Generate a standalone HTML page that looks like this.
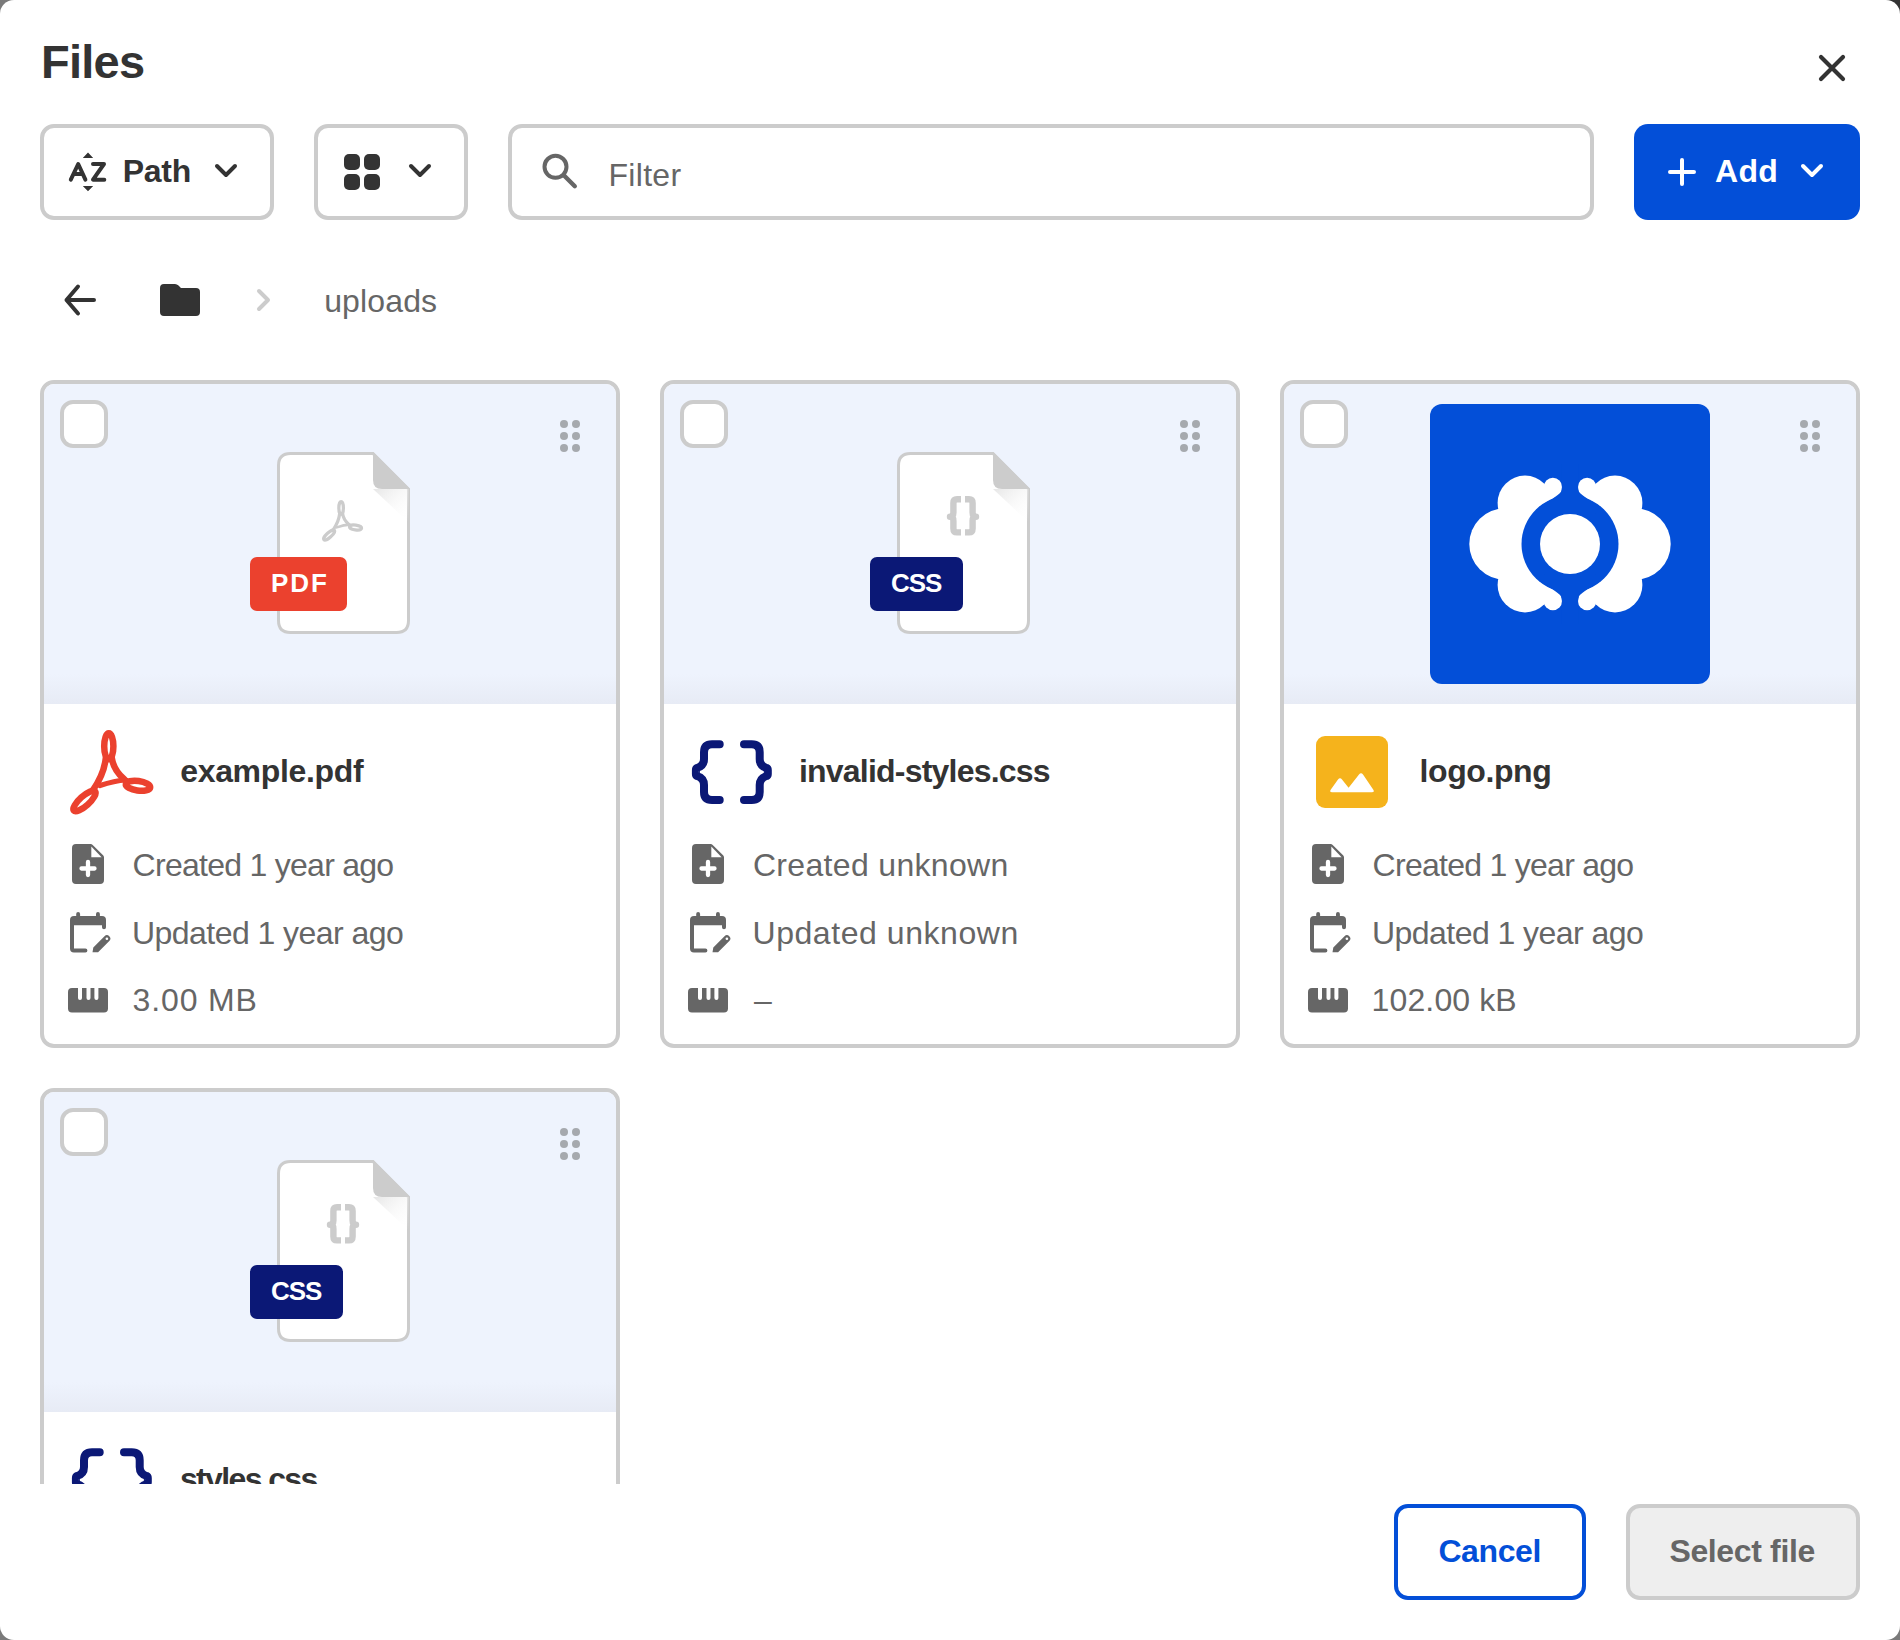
<!DOCTYPE html>
<html><head><meta charset="utf-8"><title>Files</title>
<style>
html,body{margin:0;padding:0;}
body{width:1900px;height:1640px;overflow:hidden;background:#7a7a7a;position:relative;font-family:"Liberation Sans",sans-serif;}
.modal{position:absolute;left:0;top:0;width:1900px;height:1640px;background:#fff;border-radius:14px;overflow:hidden;}
.abs{position:absolute;}
.title{position:absolute;left:41px;top:38px;font-size:47px;line-height:47px;font-weight:700;color:#333;white-space:nowrap;letter-spacing:-0.75px;}
.btn{position:absolute;box-sizing:border-box;border:4px solid #cccccc;border-radius:14px;background:#fff;}
.scroller{position:absolute;left:0;top:360px;width:1900px;height:1124px;overflow:hidden;}
.card{position:absolute;box-sizing:border-box;width:580px;height:668px;border:4px solid #cccccc;border-radius:14px;background:#fff;overflow:hidden;}
.preview{position:absolute;left:0;top:0;width:572px;height:320px;background:linear-gradient(to bottom,#eef3fd 0,#eef3fd 290px,#e7ebf5 320px);}
.cb{position:absolute;left:16px;top:16px;width:48px;height:48px;box-sizing:border-box;border:4px solid #cccccc;border-radius:13px;background:#fff;}
.badge{position:absolute;height:54px;border-radius:7px;color:#fff;font-weight:700;font-size:26px;line-height:52px;text-align:left;padding-left:21px;box-sizing:border-box;}
.name{position:absolute;left:137px;top:370.61px;font-size:32px;line-height:32px;font-weight:700;color:#333;white-space:nowrap;}
.meta{position:absolute;left:89.6px;font-size:32px;line-height:32px;color:#666;white-space:nowrap;}
.t16{font-size:32px;line-height:32px;white-space:nowrap;position:absolute;}
</style></head><body>
<div class="abs" style="left:1860px;top:0;width:40px;height:40px;background:#333"></div>
<div class="modal">
<div class="title">Files</div>
<svg class="abs" style="left:1816px;top:52px" width="32" height="32" viewBox="0 0 32 32"><path d="M5 5 L27 27 M27 5 L5 27" stroke="#333" stroke-width="4.2" stroke-linecap="round"/></svg>

<!-- toolbar -->
<div class="btn" style="left:40px;top:124px;width:234px;height:96px;"></div>
<svg class="abs" style="left:66px;top:150px" width="44" height="44" viewBox="0 0 44 44">
<path d="M22 2.4 L27.2 8 H16.8 Z M22 41.2 L27.2 36 H16.8 Z" fill="#333"/>
<path d="M4.8 29.7 L12.2 14 L19.4 29.7 M7.6 24 H16.8" fill="none" stroke="#333" stroke-width="4" stroke-linecap="round" stroke-linejoin="round"/>
<path d="M27 14 H38 L27 29.7 H38.3" fill="none" stroke="#333" stroke-width="4" stroke-linecap="round" stroke-linejoin="round"/>
</svg>
<div class="t16" style="left:122.7px;top:154.91px;font-weight:700;color:#333;letter-spacing:-0.23px">Path</div>
<svg class="abs" style="left:213px;top:162px" width="26" height="18" viewBox="0 0 26 18"><path d="M4 4 L13 13 L22 4" fill="none" stroke="#333" stroke-width="4" stroke-linecap="round" stroke-linejoin="round"/></svg>

<div class="btn" style="left:314px;top:124px;width:154px;height:96px;"></div>
<svg class="abs" style="left:344px;top:154px" width="36" height="36" viewBox="0 0 36 36" fill="#333">
<rect x="0" y="0" width="16" height="16" rx="5"/><rect x="20" y="0" width="16" height="16" rx="5"/>
<rect x="0" y="20" width="16" height="16" rx="5"/><rect x="20" y="20" width="16" height="16" rx="5"/>
</svg>
<svg class="abs" style="left:407px;top:162px" width="26" height="18" viewBox="0 0 26 18"><path d="M4 4 L13 13 L22 4" fill="none" stroke="#333" stroke-width="4" stroke-linecap="round" stroke-linejoin="round"/></svg>

<div class="btn" style="left:508px;top:124px;width:1086px;height:96px;"></div>
<svg class="abs" style="left:540px;top:152px" width="40" height="40" viewBox="0 0 40 40"><circle cx="15.5" cy="14.8" r="11" fill="none" stroke="#666" stroke-width="4"/><path d="M23.8 23.2 L34.8 34.2" stroke="#666" stroke-width="4.4" stroke-linecap="round"/></svg>
<div class="t16" style="left:608.5px;top:158.61px;color:#666;letter-spacing:0.3px">Filter</div>

<div class="abs" style="left:1634px;top:124px;width:226px;height:96px;background:#034fd8;border-radius:14px;"></div>
<svg class="abs" style="left:1666px;top:156px" width="32" height="32" viewBox="0 0 32 32"><path d="M16 4 V28 M4 16 H28" stroke="#fff" stroke-width="4" stroke-linecap="round"/></svg>
<div class="t16" style="left:1715px;top:154.91px;font-weight:700;color:#fff;letter-spacing:0.3px">Add</div>
<svg class="abs" style="left:1799px;top:162px" width="26" height="18" viewBox="0 0 26 18"><path d="M4 4 L13 13 L22 4" fill="none" stroke="#fff" stroke-width="4" stroke-linecap="round" stroke-linejoin="round"/></svg>

<!-- breadcrumbs -->
<svg class="abs" style="left:60px;top:280px" width="40" height="40" viewBox="0 0 40 40"><path d="M18 6.5 L6.5 20 L18 33.5 M6.5 20 H34" fill="none" stroke="#333" stroke-width="4" stroke-linecap="round" stroke-linejoin="round"/></svg>
<svg class="abs" style="left:160px;top:284px" width="40" height="32" viewBox="0 0 40 32"><path d="M4 0 H15 Q17 0 18.5 1.5 L21 4 H36 Q40 4 40 8 V28 Q40 32 36 32 H4 Q0 32 0 28 V4 Q0 0 4 0 Z" fill="#333"/></svg>
<svg class="abs" style="left:254px;top:286px" width="20" height="28" viewBox="0 0 20 28"><path d="M5 5 L14 14 L5 23" fill="none" stroke="#cccccc" stroke-width="4" stroke-linecap="round" stroke-linejoin="round"/></svg>
<div class="t16" style="left:324.2px;top:284.91px;color:#666;letter-spacing:0.13px">uploads</div>

<div class="scroller">
<div class="card" style="left:40px;top:20px">
<div class="preview">
<svg width="133" height="182" viewBox="0 0 133 182" style="position:absolute;left:233px;top:68px">
<defs><linearGradient id="fspdf" x1="0" y1="0" x2="1" y2="1"><stop offset="0" stop-color="#e6e6e6"/><stop offset="1" stop-color="#ffffff" stop-opacity="0"/></linearGradient></defs>
<path d="M13.5 1.5 H96 L131.5 37 V168.5 Q131.5 180.5 119.5 180.5 H13.5 Q1.5 180.5 1.5 168.5 V13.5 Q1.5 1.5 13.5 1.5 Z" fill="#fff" stroke="#cccccc" stroke-width="3"/>
<path d="M96 37 L131.5 37 L131.5 70 Z" fill="url(#fspdf)"/>
<path d="M96 0 V28 Q96 37 105 37 H133 Z" fill="#cccccc"/>
<svg x="41" y="44" width="49.4" height="49.4" viewBox="0 0 100 100"><g fill="none" stroke="#cccccc" stroke-width="6.5" stroke-linecap="round" stroke-linejoin="round">
<ellipse cx="46.8" cy="24.3" rx="4.6" ry="13"/>
<path d="M43.8 36 C 42.5 48, 38 58, 31 68"/>
<path d="M49.8 36 C 51 44, 55 51, 62 57"/>
<path d="M38 63.5 C 47 60.5, 55 58.5, 64 58" stroke-width="5.2"/>
<ellipse transform="rotate(-42 22.5 79)" cx="22.5" cy="79" rx="14.3" ry="4.8"/>
<ellipse transform="rotate(8 76 63.8)" cx="76" cy="63.8" rx="12.3" ry="4.8"/>
</g></svg>
</svg><div class="badge" style="left:206px;top:173px;width:97px;background:#eb412e;letter-spacing:1.9px">PDF</div>
<div class="cb"></div>
<svg width="572" height="320" style="position:absolute;left:0;top:0" fill="#a6a9ae"><circle cx="520" cy="40" r="4"/><circle cx="520" cy="52" r="4"/><circle cx="520" cy="64" r="4"/><circle cx="532" cy="40" r="4"/><circle cx="532" cy="52" r="4"/><circle cx="532" cy="64" r="4"/></svg>
</div>
<svg width="100" height="100" viewBox="0 0 100 100" style="position:absolute;left:18px;top:338px"><g fill="none" stroke="#eb412e" stroke-width="6.5" stroke-linecap="round" stroke-linejoin="round">
<ellipse cx="46.8" cy="24.3" rx="4.6" ry="13"/>
<path d="M43.8 36 C 42.5 48, 38 58, 31 68"/>
<path d="M49.8 36 C 51 44, 55 51, 62 57"/>
<path d="M38 63.5 C 47 60.5, 55 58.5, 64 58" stroke-width="5.2"/>
<ellipse transform="rotate(-42 22.5 79)" cx="22.5" cy="79" rx="14.3" ry="4.8"/>
<ellipse transform="rotate(8 76 63.8)" cx="76" cy="63.8" rx="12.3" ry="4.8"/>
</g></svg>
<div class="name" style="left:136.2px;letter-spacing:-0.32px">example.pdf</div>
<svg width="32" height="40" viewBox="0 0 32 40" style="position:absolute;left:28px;top:460px">
<path d="M4 0 H18.6 Q19.8 0 20.7 0.9 L31.1 11.3 Q32 12.2 32 13.4 V36 Q32 40 28 40 H4 Q0 40 0 36 V4 Q0 0 4 0 Z" fill="#666"/>
<path d="M19.3 2.6 V13.2 H29.6 Z" fill="#fff"/>
<path d="M16 18 V31 M9.5 24.5 H22.5" stroke="#fff" stroke-width="4.3" stroke-linecap="round"/>
</svg><svg width="42" height="42" viewBox="0 0 42 42" style="position:absolute;left:26px;top:528px">
<path d="M4 4 H32 Q36 4 36 8 V15.2 Q36 17.2 34 17.2 Q32 17.2 32 15.2 V13.2 H4 V36.4 H15.4 Q17.4 36.4 17.4 38.4 Q17.4 40.4 15.4 40.4 H4 Q0 40.4 0 36.4 V8 Q0 4 4 4 Z" fill="#666"/>
<rect x="6.2" y="0" width="3.9" height="7" rx="1.95" fill="#666"/>
<rect x="26" y="0" width="3.9" height="7" rx="1.95" fill="#666"/>
<path d="M22.5 40.2 L23.3 35.5 L34.5 24.3 Q36.9 21.9 39.3 24.3 Q41.7 26.7 39.3 29.1 L28.1 40.3 Z" fill="#666"/>
<circle cx="36.9" cy="26.7" r="1.3" fill="#fff"/>
</svg><svg width="40" height="25" viewBox="0 0 40 25" style="position:absolute;left:24px;top:603.8px">
<path d="M4 0 H10 V10 Q10 12 12 12 Q14 12 14 10 V0 H18.5 V10 Q18.5 12 20.5 12 Q22.5 12 22.5 10 V0 H26.4 V10 Q26.4 12 28.4 12 Q30.4 12 30.4 10 V0 H36 Q40 0 40 4 V20.5 Q40 24.5 36 24.5 H4 Q0 24.5 0 20.5 V4 Q0 0 4 0 Z" fill="#666"/>
</svg>
<div class="meta" style="left:88.6px;top:464.61px;letter-spacing:-0.729px">Created 1 year ago</div>
<div class="meta" style="left:88px;top:532.91px;letter-spacing:-0.547px">Updated 1 year ago</div>
<div class="meta" style="left:88.6px;top:600.11px;letter-spacing:0.867px">3.00 MB</div>
</div>
<div class="card" style="left:660px;top:20px">
<div class="preview">
<svg width="133" height="182" viewBox="0 0 133 182" style="position:absolute;left:233px;top:68px">
<defs><linearGradient id="fscss" x1="0" y1="0" x2="1" y2="1"><stop offset="0" stop-color="#e6e6e6"/><stop offset="1" stop-color="#ffffff" stop-opacity="0"/></linearGradient></defs>
<path d="M13.5 1.5 H96 L131.5 37 V168.5 Q131.5 180.5 119.5 180.5 H13.5 Q1.5 180.5 1.5 168.5 V13.5 Q1.5 1.5 13.5 1.5 Z" fill="#fff" stroke="#cccccc" stroke-width="3"/>
<path d="M96 37 L131.5 37 L131.5 70 Z" fill="url(#fscss)"/>
<path d="M96 0 V28 Q96 37 105 37 H133 Z" fill="#cccccc"/>
<g fill="none" stroke="#cccccc" stroke-width="6.4" stroke-linejoin="round"><path d="M64 47.3 H60 Q56.4 47.3 56.4 51 V60.5 Q56.4 64.8 53 64.8 Q56.4 64.8 56.4 69 V76.5 Q56.4 80.4 60 80.4 H64"/><path d="M68 47.3 H72 Q75.6 47.3 75.6 51 V60.5 Q75.6 64.8 79 64.8 Q75.6 64.8 75.6 69 V76.5 Q75.6 80.4 72 80.4 H68"/></g>
</svg><div class="badge" style="left:206px;top:173px;width:93px;background:#0b1876;letter-spacing:-1px">CSS</div>
<div class="cb"></div>
<svg width="572" height="320" style="position:absolute;left:0;top:0" fill="#a6a9ae"><circle cx="520" cy="40" r="4"/><circle cx="520" cy="52" r="4"/><circle cx="520" cy="64" r="4"/><circle cx="532" cy="40" r="4"/><circle cx="532" cy="52" r="4"/><circle cx="532" cy="64" r="4"/></svg>
</div>
<svg width="104" height="94" viewBox="0 0 104 94" style="position:absolute;left:16px;top:341px"><g fill="none" stroke="#0b1876" stroke-width="8" stroke-linecap="round" stroke-linejoin="round"><path d="M39.7 19.2 H32 Q24 19.2 24 27.2 V34 Q24 41 17 43 Q15.9 43.5 15.9 45 V49 Q15.9 50.5 17 51 Q24 53 24 60 V67 Q24 75 32 75 H39.7"/><path d="M64 19.2 H71.7 Q79.7 19.2 79.7 27.2 V34 Q79.7 41 86.7 43 Q87.8 43.5 87.8 45 V49 Q87.8 50.5 86.7 51 Q79.7 53 79.7 60 V67 Q79.7 75 71.7 75 H64"/></g></svg>
<div class="name" style="left:135px;letter-spacing:-0.794px">invalid-styles.css</div>
<svg width="32" height="40" viewBox="0 0 32 40" style="position:absolute;left:28px;top:460px">
<path d="M4 0 H18.6 Q19.8 0 20.7 0.9 L31.1 11.3 Q32 12.2 32 13.4 V36 Q32 40 28 40 H4 Q0 40 0 36 V4 Q0 0 4 0 Z" fill="#666"/>
<path d="M19.3 2.6 V13.2 H29.6 Z" fill="#fff"/>
<path d="M16 18 V31 M9.5 24.5 H22.5" stroke="#fff" stroke-width="4.3" stroke-linecap="round"/>
</svg><svg width="42" height="42" viewBox="0 0 42 42" style="position:absolute;left:26px;top:528px">
<path d="M4 4 H32 Q36 4 36 8 V15.2 Q36 17.2 34 17.2 Q32 17.2 32 15.2 V13.2 H4 V36.4 H15.4 Q17.4 36.4 17.4 38.4 Q17.4 40.4 15.4 40.4 H4 Q0 40.4 0 36.4 V8 Q0 4 4 4 Z" fill="#666"/>
<rect x="6.2" y="0" width="3.9" height="7" rx="1.95" fill="#666"/>
<rect x="26" y="0" width="3.9" height="7" rx="1.95" fill="#666"/>
<path d="M22.5 40.2 L23.3 35.5 L34.5 24.3 Q36.9 21.9 39.3 24.3 Q41.7 26.7 39.3 29.1 L28.1 40.3 Z" fill="#666"/>
<circle cx="36.9" cy="26.7" r="1.3" fill="#fff"/>
</svg><svg width="40" height="25" viewBox="0 0 40 25" style="position:absolute;left:24px;top:603.8px">
<path d="M4 0 H10 V10 Q10 12 12 12 Q14 12 14 10 V0 H18.5 V10 Q18.5 12 20.5 12 Q22.5 12 22.5 10 V0 H26.4 V10 Q26.4 12 28.4 12 Q30.4 12 30.4 10 V0 H36 Q40 0 40 4 V20.5 Q40 24.5 36 24.5 H4 Q0 24.5 0 20.5 V4 Q0 0 4 0 Z" fill="#666"/>
</svg>
<div class="meta" style="left:88.9px;top:464.61px;letter-spacing:0.329px">Created unknown</div>
<div class="meta" style="left:88.5px;top:532.91px;letter-spacing:0.557px">Updated unknown</div>
<div class="meta" style="left:89.9px;top:600.11px;letter-spacing:0px">&ndash;</div>
</div>
<div class="card" style="left:1280px;top:20px">
<div class="preview">
<svg width="280" height="280" viewBox="0 0 280 280" style="position:absolute;left:146px;top:20px">
<rect width="280" height="280" rx="12" fill="#034fd8"/>
<g fill="#fff">
<circle cx="75" cy="140" r="35.7"/>
<circle cx="95" cy="99" r="27.4"/>
<circle cx="95" cy="181" r="27.4"/>
<circle cx="122.9" cy="83" r="9.2"/>
<circle cx="122.9" cy="197" r="9.2"/>
<circle cx="205" cy="140" r="35.7"/>
<circle cx="185" cy="99" r="27.4"/>
<circle cx="185" cy="181" r="27.4"/>
<circle cx="157.1" cy="83" r="9.2"/>
<circle cx="157.1" cy="197" r="9.2"/>
<path d="M80 110 L123 80 L131.7 88 V192 L123 200 L80 170 Z"/>
<path d="M200 110 L157 80 L148.3 88 V192 L157 200 L200 170 Z"/>
</g>
<circle cx="140" cy="140" r="48.5" fill="#034fd8"/>
<path d="M131.9 60 H148.1 V86 C149 90, 158 95, 171 103 L140 140 L109 103 C122 95, 131 90, 131.9 86 Z" fill="#034fd8"/>
<path d="M131.9 220 H148.1 V194 C149 190, 158 185, 171 177 L140 140 L109 177 C122 185, 131 190, 131.9 194 Z" fill="#034fd8"/>
<circle cx="140" cy="140" r="30" fill="#fff"/>
</svg>
<div class="cb"></div>
<svg width="572" height="320" style="position:absolute;left:0;top:0" fill="#a6a9ae"><circle cx="520" cy="40" r="4"/><circle cx="520" cy="52" r="4"/><circle cx="520" cy="64" r="4"/><circle cx="532" cy="40" r="4"/><circle cx="532" cy="52" r="4"/><circle cx="532" cy="64" r="4"/></svg>
</div>
<svg width="72" height="72" viewBox="0 0 72 72" style="position:absolute;left:32px;top:352px">
<rect width="72" height="72" rx="9" fill="#f5b31c"/>
<path d="M14.5 54 L22 43.5 Q24 41 26 43.5 L32.6 51.8 L43 38.5 Q45 36 47 38.5 L57.5 54 Q58.5 56.2 56 56.2 H16 Q13.5 56.2 14.5 54 Z" fill="#fff"/>
</svg>
<div class="name" style="left:135.5px;letter-spacing:-0.4px">logo.png</div>
<svg width="32" height="40" viewBox="0 0 32 40" style="position:absolute;left:28px;top:460px">
<path d="M4 0 H18.6 Q19.8 0 20.7 0.9 L31.1 11.3 Q32 12.2 32 13.4 V36 Q32 40 28 40 H4 Q0 40 0 36 V4 Q0 0 4 0 Z" fill="#666"/>
<path d="M19.3 2.6 V13.2 H29.6 Z" fill="#fff"/>
<path d="M16 18 V31 M9.5 24.5 H22.5" stroke="#fff" stroke-width="4.3" stroke-linecap="round"/>
</svg><svg width="42" height="42" viewBox="0 0 42 42" style="position:absolute;left:26px;top:528px">
<path d="M4 4 H32 Q36 4 36 8 V15.2 Q36 17.2 34 17.2 Q32 17.2 32 15.2 V13.2 H4 V36.4 H15.4 Q17.4 36.4 17.4 38.4 Q17.4 40.4 15.4 40.4 H4 Q0 40.4 0 36.4 V8 Q0 4 4 4 Z" fill="#666"/>
<rect x="6.2" y="0" width="3.9" height="7" rx="1.95" fill="#666"/>
<rect x="26" y="0" width="3.9" height="7" rx="1.95" fill="#666"/>
<path d="M22.5 40.2 L23.3 35.5 L34.5 24.3 Q36.9 21.9 39.3 24.3 Q41.7 26.7 39.3 29.1 L28.1 40.3 Z" fill="#666"/>
<circle cx="36.9" cy="26.7" r="1.3" fill="#fff"/>
</svg><svg width="40" height="25" viewBox="0 0 40 25" style="position:absolute;left:24px;top:603.8px">
<path d="M4 0 H10 V10 Q10 12 12 12 Q14 12 14 10 V0 H18.5 V10 Q18.5 12 20.5 12 Q22.5 12 22.5 10 V0 H26.4 V10 Q26.4 12 28.4 12 Q30.4 12 30.4 10 V0 H36 Q40 0 40 4 V20.5 Q40 24.5 36 24.5 H4 Q0 24.5 0 20.5 V4 Q0 0 4 0 Z" fill="#666"/>
</svg>
<div class="meta" style="left:88.6px;top:464.61px;letter-spacing:-0.729px">Created 1 year ago</div>
<div class="meta" style="left:88px;top:532.91px;letter-spacing:-0.547px">Updated 1 year ago</div>
<div class="meta" style="left:87.6px;top:600.11px;letter-spacing:0.125px">102.00 kB</div>
</div>
<div class="card" style="left:40px;top:728px">
<div class="preview">
<svg width="133" height="182" viewBox="0 0 133 182" style="position:absolute;left:233px;top:68px">
<defs><linearGradient id="fscss" x1="0" y1="0" x2="1" y2="1"><stop offset="0" stop-color="#e6e6e6"/><stop offset="1" stop-color="#ffffff" stop-opacity="0"/></linearGradient></defs>
<path d="M13.5 1.5 H96 L131.5 37 V168.5 Q131.5 180.5 119.5 180.5 H13.5 Q1.5 180.5 1.5 168.5 V13.5 Q1.5 1.5 13.5 1.5 Z" fill="#fff" stroke="#cccccc" stroke-width="3"/>
<path d="M96 37 L131.5 37 L131.5 70 Z" fill="url(#fscss)"/>
<path d="M96 0 V28 Q96 37 105 37 H133 Z" fill="#cccccc"/>
<g fill="none" stroke="#cccccc" stroke-width="6.4" stroke-linejoin="round"><path d="M64 47.3 H60 Q56.4 47.3 56.4 51 V60.5 Q56.4 64.8 53 64.8 Q56.4 64.8 56.4 69 V76.5 Q56.4 80.4 60 80.4 H64"/><path d="M68 47.3 H72 Q75.6 47.3 75.6 51 V60.5 Q75.6 64.8 79 64.8 Q75.6 64.8 75.6 69 V76.5 Q75.6 80.4 72 80.4 H68"/></g>
</svg><div class="badge" style="left:206px;top:173px;width:93px;background:#0b1876;letter-spacing:-1px">CSS</div>
<div class="cb"></div>
<svg width="572" height="320" style="position:absolute;left:0;top:0" fill="#a6a9ae"><circle cx="520" cy="40" r="4"/><circle cx="520" cy="52" r="4"/><circle cx="520" cy="64" r="4"/><circle cx="532" cy="40" r="4"/><circle cx="532" cy="52" r="4"/><circle cx="532" cy="64" r="4"/></svg>
</div>
<svg width="104" height="94" viewBox="0 0 104 94" style="position:absolute;left:16px;top:341px"><g fill="none" stroke="#0b1876" stroke-width="8" stroke-linecap="round" stroke-linejoin="round"><path d="M39.7 19.2 H32 Q24 19.2 24 27.2 V34 Q24 41 17 43 Q15.9 43.5 15.9 45 V49 Q15.9 50.5 17 51 Q24 53 24 60 V67 Q24 75 32 75 H39.7"/><path d="M64 19.2 H71.7 Q79.7 19.2 79.7 27.2 V34 Q79.7 41 86.7 43 Q87.8 43.5 87.8 45 V49 Q87.8 50.5 86.7 51 Q79.7 53 79.7 60 V67 Q79.7 75 71.7 75 H64"/></g></svg>
<div class="name" style="left:135.9px;letter-spacing:-1.62px">styles.css</div>
<svg width="32" height="40" viewBox="0 0 32 40" style="position:absolute;left:28px;top:460px">
<path d="M4 0 H18.6 Q19.8 0 20.7 0.9 L31.1 11.3 Q32 12.2 32 13.4 V36 Q32 40 28 40 H4 Q0 40 0 36 V4 Q0 0 4 0 Z" fill="#666"/>
<path d="M19.3 2.6 V13.2 H29.6 Z" fill="#fff"/>
<path d="M16 18 V31 M9.5 24.5 H22.5" stroke="#fff" stroke-width="4.3" stroke-linecap="round"/>
</svg><svg width="42" height="42" viewBox="0 0 42 42" style="position:absolute;left:26px;top:528px">
<path d="M4 4 H32 Q36 4 36 8 V15.2 Q36 17.2 34 17.2 Q32 17.2 32 15.2 V13.2 H4 V36.4 H15.4 Q17.4 36.4 17.4 38.4 Q17.4 40.4 15.4 40.4 H4 Q0 40.4 0 36.4 V8 Q0 4 4 4 Z" fill="#666"/>
<rect x="6.2" y="0" width="3.9" height="7" rx="1.95" fill="#666"/>
<rect x="26" y="0" width="3.9" height="7" rx="1.95" fill="#666"/>
<path d="M22.5 40.2 L23.3 35.5 L34.5 24.3 Q36.9 21.9 39.3 24.3 Q41.7 26.7 39.3 29.1 L28.1 40.3 Z" fill="#666"/>
<circle cx="36.9" cy="26.7" r="1.3" fill="#fff"/>
</svg><svg width="40" height="25" viewBox="0 0 40 25" style="position:absolute;left:24px;top:603.8px">
<path d="M4 0 H10 V10 Q10 12 12 12 Q14 12 14 10 V0 H18.5 V10 Q18.5 12 20.5 12 Q22.5 12 22.5 10 V0 H26.4 V10 Q26.4 12 28.4 12 Q30.4 12 30.4 10 V0 H36 Q40 0 40 4 V20.5 Q40 24.5 36 24.5 H4 Q0 24.5 0 20.5 V4 Q0 0 4 0 Z" fill="#666"/>
</svg>
<div class="meta" style="left:88.6px;top:464.61px;letter-spacing:-0.729px">Created 1 year ago</div>
<div class="meta" style="left:88px;top:532.91px;letter-spacing:-0.547px">Updated 1 year ago</div>
<div class="meta" style="left:88.6px;top:600.11px;letter-spacing:0.6px">3.00 kB</div>
</div>
</div>

<!-- footer -->
<div class="btn" style="left:1394px;top:1504px;width:192px;height:96px;border-color:#034fd8;"></div>
<div class="t16" style="left:1438.4px;top:1534.91px;font-weight:700;color:#034fd8;letter-spacing:-0.4px">Cancel</div>
<div class="btn" style="left:1626px;top:1504px;width:234px;height:96px;background:#eeeeee;"></div>
<div class="t16" style="left:1669.4px;top:1534.91px;font-weight:700;color:#666;letter-spacing:-0.35px">Select file</div>
</div>
</body></html>
